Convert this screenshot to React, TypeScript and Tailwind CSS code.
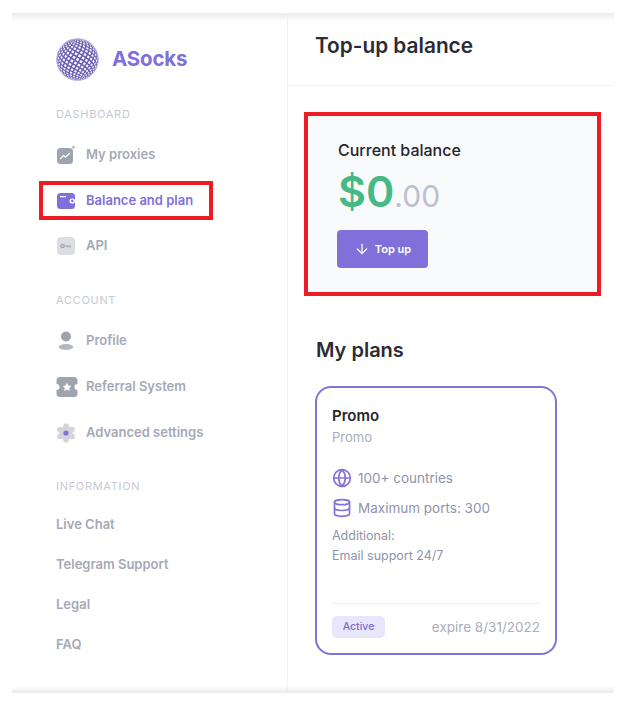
import { ArrowDown, Database, Globe } from "lucide-react"

const font = "font-['Inter',sans-serif]"

// project a lat/lon on the ball, degrees in, svg units out
function project(lat: number, lon: number) {
  const la = (lat * Math.PI) / 180
  const lo = (lon * Math.PI) / 180
  return `${(21 * Math.cos(la) * Math.sin(lo)).toFixed(2)},${(21 * Math.sin(la)).toFixed(2)}`
}

function buildCells() {
  const cells: string[] = []
  for (let i = -11; i <= 11; i++) {
    const offset = i % 2 === 0 ? 0 : 8
    for (let j = -6; j <= 6; j++) {
      const lat = i * 8
      const lon = j * 16 + offset
      if (Math.abs(lon) > 84) continue
      cells.push(
        [
          project(lat - 4.6, lon),
          project(lat, Math.min(lon + 5, 90)),
          project(lat + 4.6, lon),
          project(lat, Math.max(lon - 5, -90)),
        ].join(" "),
      )
    }
  }
  return cells
}

function Logo() {
  return (
    <svg width="43" height="43" viewBox="-21.5 -21.5 43 43" className="shrink-0">
      <circle r="21" fill="#6a5db5" />
      <g fill="#fff" transform="rotate(-14)">
        {buildCells().map((points) => (
          <polygon key={points} points={points} />
        ))}
      </g>
      <circle r="20.7" fill="none" stroke="#b9b2e0" strokeWidth="0.8" />
    </svg>
  )
}

function ProxiesIcon() {
  return (
    <svg width="20" height="20" viewBox="0 0 20 20">
      <rect x="1" y="3" width="16" height="16" rx="3.5" fill="#9ea3b0" />
      <path d="M4 14l3.5-3.5 2 1.5L14 8" fill="none" stroke="#fff" strokeWidth="1.3" />
      <circle cx="17.5" cy="2.2" r="1.6" fill="#c3c6cf" />
    </svg>
  )
}

function WalletIcon() {
  return (
    <svg width="20" height="20" viewBox="0 0 20 20">
      <rect x="1" y="2" width="18" height="16" rx="3.5" fill="#8070da" />
      <rect x="4" y="5" width="6" height="1.2" fill="#fff" />
      <rect x="13.5" y="7.5" width="5.5" height="5" rx="2.5" fill="#fff" />
      <circle cx="16.3" cy="10" r="1.2" fill="#8070da" />
    </svg>
  )
}

function KeyIcon() {
  return (
    <svg width="20" height="20" viewBox="0 0 20 20">
      <rect x="1" y="1" width="18" height="18" rx="4" fill="#dcdee4" />
      <circle cx="6.5" cy="10" r="1.7" fill="none" stroke="#9ea3b0" strokeWidth="1.2" />
      <path d="M8.2 10h6.3M12 10v1.6M14.2 10v1.6" fill="none" stroke="#9ea3b0" strokeWidth="1.2" />
    </svg>
  )
}

function ProfileIcon() {
  return (
    <svg width="20" height="20" viewBox="0 0 20 20">
      <circle cx="10" cy="5.5" r="5" fill="#9ea3b0" />
      <ellipse cx="10" cy="16" rx="7.3" ry="3" fill="#b4b8c3" />
    </svg>
  )
}

function TicketIcon() {
  return (
    <svg width="22" height="20" viewBox="0 0 22 20">
      <path
        d="M4 0h14a3.500 3.500 0 0 1 3.500 3.500V7a3 3 0 0 0 0 6v3.500A3.500 3.500 0 0 1 18 20H4a3.500 3.500 0 0 1-3.500-3.500V13a3 3 0 0 0 0-6V3.500A3.500 3.500 0 0 1 4 0z"
        fill="#9ea3b0"
      />
      <path d="M11 5.800l1.400 2.800 3 .4-2.200 2.100.6 3-2.800-1.500-2.800 1.500.6-3L6.600 9l3-.4z" fill="#fff" />
    </svg>
  )
}

function GearIcon() {
  return (
    <svg width="20" height="20" viewBox="0 0 20 20">
      <g fill="#d3d5dc">
        <circle cx="10" cy="10" r="7" />
        <circle cx="10" cy="3" r="2.800" />
        <circle cx="10" cy="17" r="2.800" />
        <circle cx="3.900" cy="6.500" r="2.800" />
        <circle cx="16.100" cy="6.500" r="2.800" />
        <circle cx="3.900" cy="13.500" r="2.800" />
        <circle cx="16.100" cy="13.500" r="2.800" />
      </g>
      <circle cx="10" cy="10" r="2.600" fill="#8070da" />
    </svg>
  )
}

function SectionLabel({ text, className }: { text: string; className: string }) {
  return <div className={`text-[11px] leading-[14px] tracking-[0.7px] text-[#c6c9d2] ${className}`}>{text}</div>
}

function NavItem({ icon, label, active }: { icon: React.ReactNode; label: string; active?: boolean }) {
  return (
    <div className="flex h-[20px] items-center">
      <div className="flex w-[30px] shrink-0 items-center">{icon}</div>
      <span className={`text-[13px] font-semibold ${active ? "text-[#8070da]" : "text-[#a5a9b6]"}`}>{label}</span>
    </div>
  )
}

function Sidebar() {
  return (
    <aside className="flex w-[276px] shrink-0 flex-col border-r border-[#f1f2f5] pl-[44px] pt-[25px]">
      {/* Logo */}
      <div className="flex h-[43px] items-center gap-[13px]">
        <Logo />
        <span className="text-[20.500px] font-bold tracking-[-0.2px] text-[#8070da]">ASocks</span>
      </div>

      <SectionLabel text="DASHBOARD" className="mt-[26px]" />
      <div className="mt-[24px] flex flex-col gap-[25.500px]">
        <NavItem icon={<ProxiesIcon />} label="My proxies" />
        {/* Red mark round the current item */}
        <div className="-my-[9.500px] -ml-[17px] flex h-[39px] w-[174px] items-center border-[4px] border-[#ed1c24] pl-[13px]">
          <NavItem icon={<WalletIcon />} label="Balance and plan" active />
        </div>
        <NavItem icon={<KeyIcon />} label="API" />
      </div>

      <SectionLabel text="ACCOUNT" className="mt-[37px]" />
      <div className="mt-[24px] flex flex-col gap-[26px]">
        <NavItem icon={<ProfileIcon />} label="Profile" />
        <NavItem icon={<TicketIcon />} label="Referral System" />
        <NavItem icon={<GearIcon />} label="Advanced settings" />
      </div>

      <SectionLabel text="INFORMATION" className="mt-[36px]" />
      <div className="mt-[21px] flex flex-col gap-[20px] text-[13px] font-semibold leading-[20px] text-[#a5a9b6]">
        <div>Live Chat</div>
        <div>Telegram Support</div>
        <div>Legal</div>
        <div>FAQ</div>
      </div>
    </aside>
  )
}

function PlanCard() {
  return (
    <div className="ml-[11px] flex h-[269px] w-[242px] flex-col rounded-[16px] border-2 border-[#8172da] px-[15px] pt-[18px] pb-[15px]">
      <div className="text-[15px] font-semibold leading-[20px] text-[#25262b]">Promo</div>
      <div className="mt-[1px] text-[13px] leading-[20px] text-[#a9adb9]">Promo</div>

      <div className="mt-[21px] flex h-[20px] items-center gap-[6px] text-[13.500px] text-[#8f94aa]">
        <Globe size={20} strokeWidth={2} className="text-[#8172da]" />
        <span>100+ countries</span>
      </div>
      <div className="mt-[10px] flex h-[20px] items-center gap-[6px] text-[13.500px] text-[#8f94aa]">
        <Database size={20} strokeWidth={2} className="text-[#8172da]" />
        <span>Maximum ports: 300</span>
      </div>
      <div className="mt-[8px] text-[12.500px] leading-[20px] text-[#8f94aa]">
        <div>Additional:</div>
        <div>Email support 24/7</div>
      </div>

      <div className="mt-auto flex items-center justify-between border-t border-[#f1f2f5] pt-[12px]">
        <span className="flex h-[22px] w-[53px] items-center justify-center rounded-[5px] bg-[#e9e5fb] text-[10.500px] font-medium text-[#7c6fc9]">
          Active
        </span>
        <span className="text-[13.500px] text-[#a9adb9]">expire 8/31/2022</span>
      </div>
    </div>
  )
}

export default function App() {
  return (
    <div className={`relative h-[701px] w-[635px] bg-white pl-[12px] pr-[21px] pt-[13px] ${font}`}>
      <div className="flex h-[680px] w-[602px] bg-white">
        <Sidebar />

        <main className="flex min-w-0 flex-1 flex-col">
          <header className="h-[73px] border-b border-[#f1f2f5] pl-[27px] pt-[20px]">
            <h1 className="text-[20.800px] font-semibold leading-[26px] text-[#2b2c33]">Top-up balance</h1>
          </header>

          <div className="pl-[16px] pt-[26px]">
            {/* Balance card, red mark from the original */}
            <section className="h-[184px] w-[297px] border-[4px] border-[#ed1c24] bg-[#f9fafc] pl-[30px] pt-[24px]">
              <div className="text-[16px] font-medium leading-[20px] text-[#25262b]">Current balance</div>
              <div className="mt-[5px] flex h-[52px] items-baseline">
                <span className="text-[43px] font-semibold leading-[52px] text-[#46b986]">$0</span>
                <span className="text-[30px] leading-[52px] text-[#bcc0cf]">.00</span>
              </div>
              <button className="-ml-[1px] mt-[13px] flex h-[38px] w-[91px] items-center justify-center gap-[5px] rounded-[4px] bg-[#8170da] text-[11px] font-semibold text-white">
                <ArrowDown size={16} strokeWidth={1.8} />
                Top up
              </button>
            </section>

            <h2 className="ml-[12px] mt-[41px] text-[20px] font-semibold leading-[26px] text-[#2b2c33]">My plans</h2>
            <div className="mt-[23px]">
              <PlanCard />
            </div>
          </div>
        </main>
      </div>

      {/* Soft shadow edges of the cropped window */}
      <div className="pointer-events-none absolute left-[12px] top-[13px] h-[9px] w-[602px] bg-gradient-to-b from-[#ebecee] to-transparent" />
      <div className="pointer-events-none absolute left-[12px] top-[686px] h-[7px] w-[602px] bg-gradient-to-t from-[#e9eaec] to-transparent" />
    </div>
  )
}
